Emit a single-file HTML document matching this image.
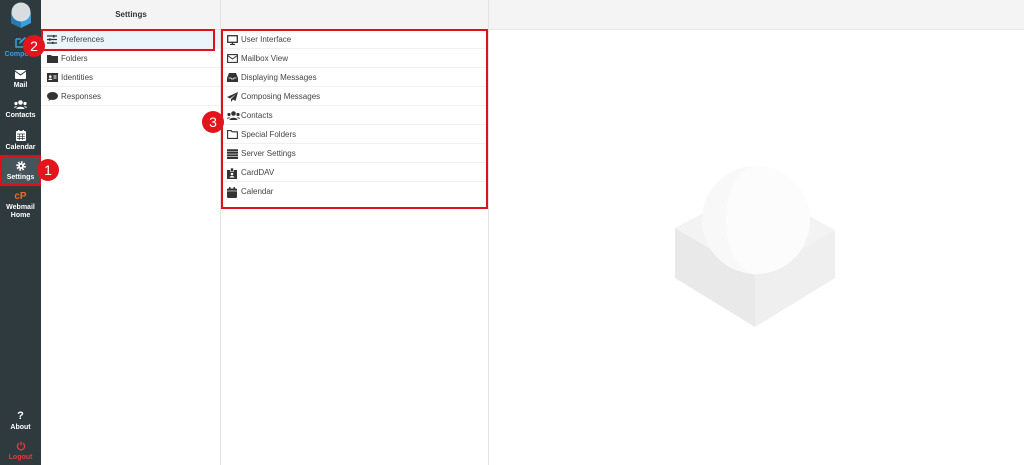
<!DOCTYPE html>
<html><head><meta charset="utf-8"><style>
*{margin:0;padding:0;box-sizing:border-box}
body{width:1024px;height:465px;position:relative;overflow:hidden;background:#fff;font-family:"Liberation Sans",sans-serif;font-size:8px;color:#333}
.sb{position:absolute;left:0;top:0;width:41px;height:465px;background:#2f3a3f}
.nav{position:absolute;left:0;width:41px;text-align:center;color:#fff;font-size:7px;font-weight:bold;line-height:8px}
.nav svg{display:block;margin:0 auto 3px}
.hdr{position:absolute;top:0;height:30px;background:#f4f4f4;border-bottom:1px solid #e6e6e6}
.vl{position:absolute;top:0;width:1px;height:465px;background:#e4e4e4}
.item{position:absolute;height:19px;line-height:20px;border-bottom:1px solid #f0f0f0;color:#444;font-size:8px}
.item svg{position:absolute;left:6px;top:5px}
.item span{position:absolute;left:20px}
.red{position:absolute;border:2px solid #e0101a}
.circ{position:absolute;width:22px;height:22px;border-radius:50%;background:#e2141c;color:#fff;font-size:14px;text-align:center;line-height:22px}
</style></head><body>
<div class="sb"></div>
<svg style="position:absolute;left:7px;top:1px" width="28" height="28" viewBox="0 0 28 28"><path d="M4 12 L14 7 L24 12 L24 22 L14 27 L4 22Z" fill="#3a9fe0"/><path d="M4 12 L14 17 L14 27 L4 22Z" fill="#2a79b0"/><circle cx="14" cy="11" r="9.5" fill="#d8dde0"/></svg>
<div class="nav" style="top:37px;color:#3a9fe0"><svg width="11" height="11" viewBox="0 0 11 11"><path d="M1 2h5M1 2v8h8V6" stroke="#3a9fe0" stroke-width="1.5" fill="none"/><path d="M4 7l1-3 5-4 1 1-5 5z" fill="#3a9fe0"/></svg>Compose</div>
<div class="nav" style="top:70px"><svg width="11" height="9" viewBox="0 0 11 9"><rect width="11" height="9" rx="1" fill="#fff"/><path d="M0 1l5.5 4L11 1" stroke="#2f3a3f" fill="none"/></svg>Mail</div>
<div class="nav" style="top:100px"><svg width="13" height="9" viewBox="0 0 13 9"><circle cx="6.5" cy="2.5" r="2.3" fill="#fff"/><circle cx="2" cy="3.5" r="1.6" fill="#fff"/><circle cx="11" cy="3.5" r="1.6" fill="#fff"/><path d="M2.5 9c0-3 8-3 8 0zM0 8c0-2 3-2 3-1zM13 8c0-2-3-2-3-1z" fill="#fff"/></svg>Contacts</div>
<div class="nav" style="top:130px"><svg width="10" height="11" viewBox="0 0 10 11"><rect y="1" width="10" height="10" rx="1" fill="#fff"/><rect x="2" y="0" width="1.5" height="3" fill="#fff"/><rect x="6.5" y="0" width="1.5" height="3" fill="#fff"/><path d="M1 4h8M1 6.3h8M1 8.6h8M3.3 4v6M6.6 4v6" stroke="#2f3a3f" stroke-width=".7"/></svg>Calendar</div>
<div style="position:absolute;left:0;top:155px;width:41px;height:31px;background:#46545b;border:2px solid #e0101a"></div>
<div class="nav" style="top:161px"><svg width="10" height="10" viewBox="0 0 10 10"><circle cx="5" cy="5" r="3.6" fill="none" stroke="#fff" stroke-width="2.4" stroke-dasharray="1.6 1.2"/><circle cx="5" cy="5" r="3" fill="#fff"/><circle cx="5" cy="5" r="1.2" fill="#46545b"/></svg>Settings</div>
<div class="nav" style="top:192px"><div style="color:#f06a25;font-size:10px;line-height:10px;margin-bottom:2px">cP</div>Webmail<br>Home</div>
<div class="nav" style="top:411px"><div style="font-size:11px;line-height:11px;margin-bottom:2px">?</div>About</div>
<div class="nav" style="top:441px;color:#e03c3c"><svg width="10" height="10" viewBox="0 0 10 10"><path d="M3 2.2A3.6 3.6 0 1 0 7 2.2" stroke="#e03c3c" stroke-width="1.4" fill="none"/><path d="M5 0.5v4" stroke="#e03c3c" stroke-width="1.4"/></svg>Logout</div>

<div class="hdr" style="left:41px;width:180px;text-align:center;line-height:30px;font-weight:bold;font-size:8px;color:#333">Settings</div>
<div class="hdr" style="left:221px;width:268px"></div>
<div class="hdr" style="left:489px;width:535px"></div>
<div class="vl" style="left:220px"></div>
<div class="vl" style="left:488px"></div>

<div class="item" style="left:41px;top:30px;width:179px;background:#e9f4fb"><svg width="10" height="9" viewBox="0 0 10 9"><path d="M0 1h10M0 4.5h10M0 8h10" stroke="#333" stroke-width="1.2"/><rect x="6" y="0" width="1.5" height="2.5" fill="#333"/><rect x="2" y="3.3" width="1.5" height="2.5" fill="#333"/><rect x="5" y="6.8" width="1.5" height="2.5" fill="#333"/></svg><span>Preferences</span></div>
<div class="item" style="left:41px;top:49px;width:179px"><svg width="11" height="9" viewBox="0 0 11 9"><path d="M0 1h4l1 1h6v7H0z" fill="#333"/></svg><span>Folders</span></div>
<div class="item" style="left:41px;top:68px;width:179px"><svg width="11" height="9" viewBox="0 0 11 9"><rect width="11" height="9" fill="#333"/><circle cx="3.3" cy="3.6" r="1.3" fill="#fff"/><path d="M1.3 7c0-2 4-2 4 0z" fill="#fff"/><path d="M6.5 3h3M6.5 5h3" stroke="#fff"/></svg><span>Identities</span></div>
<div class="item" style="left:41px;top:87px;width:179px"><svg width="11" height="9" viewBox="0 0 11 9"><ellipse cx="5.5" cy="4" rx="5.5" ry="4" fill="#333"/><path d="M1 9l2-3 2 1z" fill="#333"/></svg><span>Responses</span></div>

<div class="item" style="left:221px;top:30px;width:267px"><svg width="11" height="10" viewBox="0 0 11 10"><rect x=".7" y=".7" width="9.6" height="6.6" fill="none" stroke="#333" stroke-width="1.3"/><path d="M3 9.5h5M5.5 7.5v2" stroke="#333" stroke-width="1.3"/></svg><span>User Interface</span></div>
<div class="item" style="left:221px;top:49px;width:267px"><svg width="11" height="9" viewBox="0 0 11 9"><rect x=".6" y=".6" width="9.8" height="7.8" fill="none" stroke="#333" stroke-width="1.1"/><path d="M.6 1.5l4.9 3.5 4.9-3.5" stroke="#333" fill="none"/></svg><span>Mailbox View</span></div>
<div class="item" style="left:221px;top:68px;width:267px"><svg width="11" height="9" viewBox="0 0 11 9"><path d="M2 0h7l2 5v4H0V5z" fill="#333"/><path d="M1.5 5h2.5l.5 1h2l.5-1h2.5" stroke="#fff" fill="none" stroke-width=".8"/></svg><span>Displaying Messages</span></div>
<div class="item" style="left:221px;top:87px;width:267px"><svg width="11" height="10" viewBox="0 0 11 10"><path d="M11 0L0 5l3 1.5L9 2 4 7v3l2-2.5L8.5 9z" fill="#333"/></svg><span>Composing Messages</span></div>
<div class="item" style="left:221px;top:106px;width:267px"><svg width="13" height="9" viewBox="0 0 13 9"><circle cx="6.5" cy="2.5" r="2.3" fill="#333"/><circle cx="2" cy="3.5" r="1.6" fill="#333"/><circle cx="11" cy="3.5" r="1.6" fill="#333"/><path d="M2.5 9c0-3 8-3 8 0zM0 8c0-2 3-2 3-1zM13 8c0-2-3-2-3-1z" fill="#333"/></svg><span>Contacts</span></div>
<div class="item" style="left:221px;top:125px;width:267px"><svg width="11" height="9" viewBox="0 0 11 9"><path d="M.6 8.4V.6h3.5l1 1.2h5.3v6.6z" fill="none" stroke="#333" stroke-width="1.1"/></svg><span>Special Folders</span></div>
<div class="item" style="left:221px;top:144px;width:267px"><svg width="11" height="10" viewBox="0 0 11 10"><path d="M0 1.2h11M0 3.8h11M0 6.4h11M0 9h11" stroke="#333" stroke-width="2"/></svg><span>Server Settings</span></div>
<div class="item" style="left:221px;top:163px;width:267px"><svg width="10" height="11" viewBox="0 0 10 11"><rect y="2" width="10" height="9" fill="#333"/><rect x="3.5" y="0" width="3" height="3.5" fill="#333" stroke="#fff" stroke-width=".6"/><circle cx="5" cy="6" r="1.3" fill="#fff"/><path d="M2.5 9.5c0-2 5-2 5 0z" fill="#fff"/></svg><span>CardDAV</span></div>
<div class="item" style="left:221px;top:182px;width:267px;border:none"><svg width="10" height="11" viewBox="0 0 10 11"><rect y="1.5" width="10" height="9.5" rx="1" fill="#333"/><rect x="2" y="0" width="1.5" height="3" fill="#333"/><rect x="6.5" y="0" width="1.5" height="3" fill="#333"/><path d="M0 4h10" stroke="#fff" stroke-width=".6"/></svg><span>Calendar</span></div>

<div class="red" style="left:41px;top:29px;width:174px;height:22px"></div>
<div class="red" style="left:221px;top:29px;width:267px;height:180px"></div>
<div class="circ" style="left:23px;top:35px">2</div>
<div class="circ" style="left:202px;top:111px">3</div>
<div class="circ" style="left:37px;top:159px">1</div>

<svg style="position:absolute;left:670px;top:160px" width="175" height="175" viewBox="670 160 175 175">
<path d="M675 228L755 275L755 327L675 278Z" fill="#e9e9e9"/>
<path d="M755 275L835 230L835 278L755 327Z" fill="#efefef"/>
<path d="M675 228L755 186L835 230L755 275Z" fill="#f3f3f3"/>
<circle cx="756" cy="220" r="54" fill="#f8f8f8"/>
<path d="M756 166A54 54 0 0 1 756 274A30 54 0 0 1 756 166Z" fill="#fcfcfc"/>
</svg>
</body></html>
